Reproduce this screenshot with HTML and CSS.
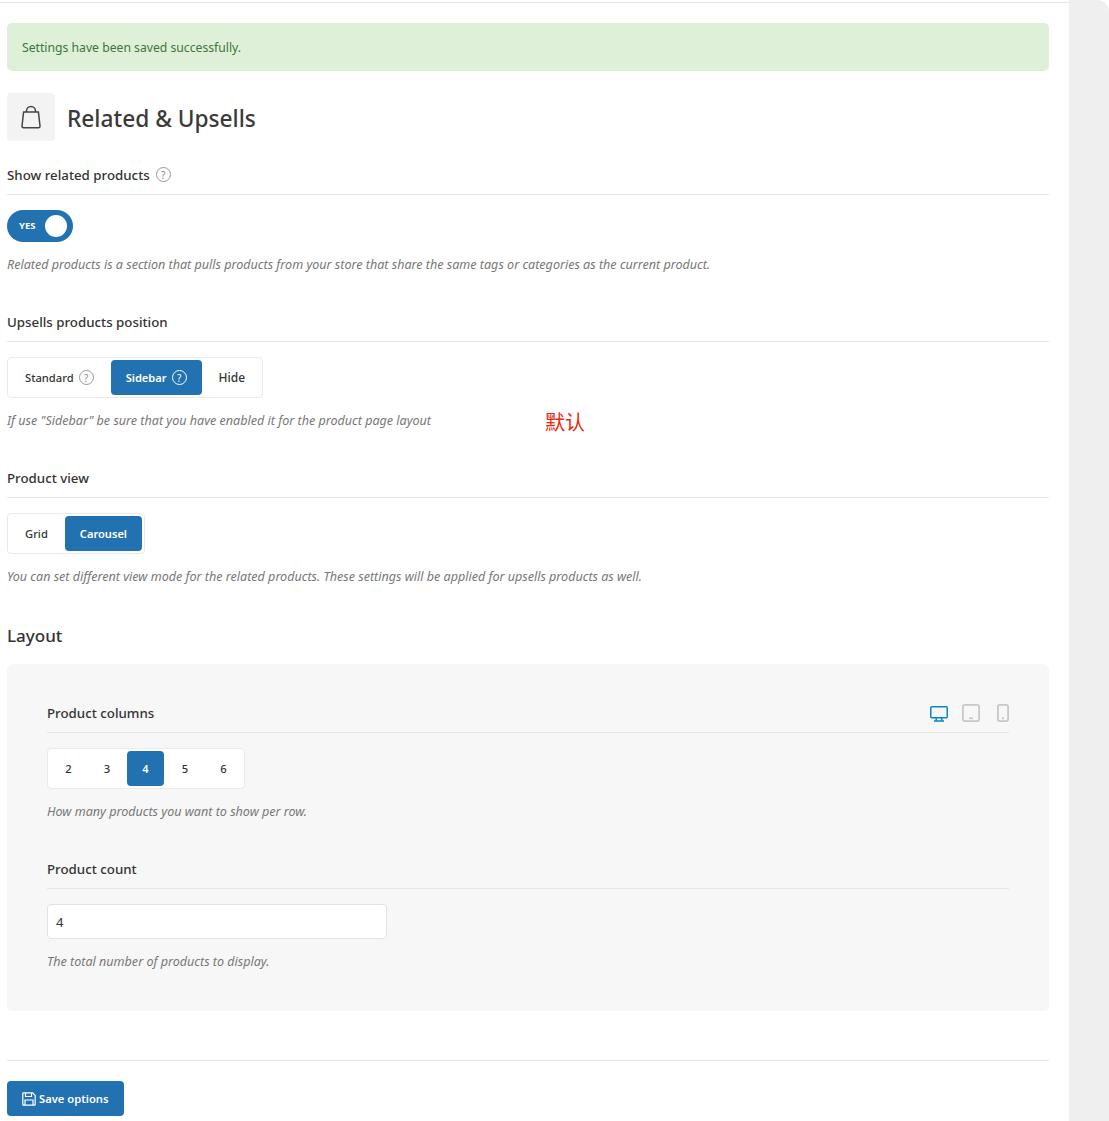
FILE: index.html
```html
<!DOCTYPE html>
<html lang="en">
<head>
    <meta charset="UTF-8">
    <meta name="viewport" content="width=device-width, initial-scale=1.0">
    <title>Related &amp; Upsells</title>
    <link rel="stylesheet" href="styles.css">
</head>
<body>
    <div class="page">
        <main class="main">
            <div class="notice">Settings have been saved successfully.</div>

            <div class="page-title">
                <span class="title-icon">
                    <svg width="22" height="24" viewBox="0 0 22 24" fill="none" stroke="#444" stroke-width="1.5">
                        <path d="M3.600 7h14.800l1.600 14a1.500 1.500 0 0 1-1.500 1.700H3.500a1.500 1.500 0 0 1-1.500-1.700z"/>
                        <path d="M6.500 7V6a4.500 4.500 0 0 1 9 0v1"/>
                    </svg>
                </span>
                <h1>Related &amp; Upsells</h1>
            </div>

            <section class="field field-first">
                <div class="field-head">
                    <h3>Show related products</h3>
                    <span class="help">?</span>
                </div>
                <div class="toggle"><span class="toggle-text">YES</span><span class="toggle-knob"></span></div>
                <p class="desc">Related products is a section that pulls products from your store that share the same tags or categories as the current product.</p>
            </section>

            <section class="field">
                <div class="field-head"><h3>Upsells products position</h3></div>
                <div class="btn-group">
                    <span class="opt">Standard <span class="help">?</span></span>
                    <span class="opt active">Sidebar <span class="help">?</span></span>
                    <span class="opt opt-hide">Hide</span>
                </div>
                <p class="desc">If use "Sidebar" be sure that you have enabled it for the product page layout</p>
                <span class="note">默认</span>
            </section>

            <section class="field">
                <div class="field-head"><h3>Product view</h3></div>
                <div class="btn-group">
                    <span class="opt">Grid</span>
                    <span class="opt active">Carousel</span>
                </div>
                <p class="desc">You can set different view mode for the related products. These settings will be applied for upsells products as well.</p>
            </section>

            <h2 class="group-title">Layout</h2>
            <div class="panel">
                <section class="field panel-field">
                    <div class="field-head">
                        <h3>Product columns</h3>
                        <div class="devices">
                            <svg class="on" width="18" height="18" viewBox="0 0 18 18" fill="none" stroke="#0a86c8" stroke-width="1.5">
                                <rect x=".75" y="2.750" width="16.500" height="11" rx="1"/>
                                <path d="M6.500 14l-.5 2.500M11.500 14l.5 2.500M4 17h10"/>
                            </svg>
                            <svg width="18" height="18" viewBox="0 0 18 18" fill="none" stroke="#c8c8c8" stroke-width="1.800">
                                <rect x=".9" y=".9" width="16.200" height="16.200" rx="2"/>
                                <path d="M7 14.250h4"/>
                            </svg>
                            <svg class="phone" width="12" height="18" viewBox="0 0 12 18" fill="none" stroke="#c8c8c8" stroke-width="1.800">
                                <rect x=".9" y=".9" width="10.200" height="16.200" rx="2"/>
                                <path d="M5 14.250h2"/>
                            </svg>
                        </div>
                    </div>
                    <div class="btn-group num-group">
                        <span class="opt">2</span>
                        <span class="opt">3</span>
                        <span class="opt active">4</span>
                        <span class="opt">5</span>
                        <span class="opt">6</span>
                    </div>
                    <p class="desc">How many products you want to show per row.</p>
                </section>
                <section class="field panel-field">
                    <div class="field-head"><h3>Product count</h3></div>
                    <input class="text-input" type="text" value="4">
                    <p class="desc">The total number of products to display.</p>
                </section>
            </div>

            <div class="actions">
                <button class="save-btn">
                    <svg width="14" height="14" viewBox="0 0 14 14" fill="none" stroke="#fff" stroke-width="1.200">
                        <path d="M1.600.8h9l2.600 2.600v9a.8.8 0 0 1-.8.8H1.600a.8.8 0 0 1-.8-.8V1.600a.8.8 0 0 1 .8-.8z"/>
                        <path d="M3.500 1v3.500h6V1M3 13V8h8v5"/>
                    </svg>
                    Save options
                </button>
            </div>
        </main>
        <aside class="side"></aside>
    </div>
</body>
</html>
```

FILE: styles.css
```css
html, body {
    margin: 0;
    padding: 0;
    background: #fff;
}
body {
    font-family: "Noto Sans", "Noto Sans CJK SC", sans-serif;
    font-size: 13px;
    color: #333;
}
.page {
    display: flex;
    height: 1121px;
    overflow: hidden;
}
.main {
    width: 1069px;
    box-sizing: border-box;
    padding: 0 20px 0 7px;
    position: relative;
    flex: none;
}
.main::before {
    content: "";
    display: block;
    height: 1px;
    margin: 2px -20px 0 -7px;
    background: #e8e8e8;
}
.side {
    width: 40px;
    flex: none;
    background: #efefef;
    border-top-right-radius: 12px;
}
.notice {
    margin-top: 20px;
    height: 47px;
    line-height: 48px;
    padding: 1px 15px 0;
    background: #dff0d8;
    border-radius: 5px;
    color: #3c763d;
    font-size: 12.2px;
}
.page-title {
    display: flex;
    align-items: center;
    gap: 12px;
    margin-top: 22px;
}
.title-icon {
    width: 48px;
    height: 48px;
    display: flex;
    align-items: center;
    justify-content: center;
    background: #f3f3f3;
    border-radius: 4px;
}
h1 {
    margin: 2px 0 0;
    font-size: 22.7px;
    font-weight: 500;
    color: #3a3a3a;
}
.field {
    position: relative;
    margin-top: 35px;
}
.field-first {
    margin-top: 21px;
}
.field-head {
    display: flex;
    align-items: center;
    gap: 6px;
    height: 25px;
    padding-bottom: 7px;
    border-bottom: 1px solid #e5e5e5;
    margin-bottom: 15px;
}
h3 {
    margin: 0;
    font-size: 13.3px;
    font-weight: 500;
    color: #333;
}
.help {
    display: inline-flex;
    align-items: center;
    justify-content: center;
    width: 13px;
    height: 13px;
    border: 1px solid #999;
    border-radius: 50%;
    font-size: 10px;
    line-height: 1;
    font-weight: 400;
    color: #888;
}
.toggle {
    display: flex;
    align-items: center;
    justify-content: space-between;
    box-sizing: border-box;
    width: 66px;
    height: 32px;
    padding: 0 6px 0 12px;
    background: #2271b1;
    border-radius: 16px;
}
.toggle-text {
    margin-bottom: 2px;
    font-size: 9.5px;
    font-weight: 700;
    color: #fff;
}
.toggle-knob {
    width: 22px;
    height: 22px;
    border-radius: 50%;
    background: #fff;
}
.desc {
    margin: 14px 0 0;
    font-size: 12.55px;
    line-height: 18px;
    font-style: italic;
    color: #777;
}
.btn-group {
    display: inline-flex;
    gap: 2px;
    box-sizing: border-box;
    height: 41px;
    padding: 2px;
    background: #fff;
    border: 1px solid #eaeaea;
    border-radius: 4px;
    vertical-align: top;
}
.opt {
    display: flex;
    align-items: center;
    gap: 5px;
    padding: 0 15px;
    font-size: 11.2px;
    font-weight: 500;
    color: #333;
    border-radius: 4px;
}
.opt-hide {
    font-size: 12px;
}
.opt.active {
    background: #2271b1;
    color: #fff;
    font-weight: 600;
    font-size: 11.1px;
}
.opt.active .help {
    border-color: #fff;
    color: #fff;
}
.btn-group + .desc {
    margin-top: 14px;
}
.note {
    position: absolute;
    left: 538px;
    top: 100px;
    font-family: "Noto Sans CJK SC", sans-serif;
    font-size: 20px;
    line-height: 26px;
    color: #e8280c;
}
.group-title {
    margin: 38px 0 0;
    font-size: 17px;
    font-weight: 500;
    line-height: 24px;
    color: #333;
}
.panel {
    margin-top: 16px;
    height: 347px;
    box-sizing: border-box;
    padding: 1px 40px 0;
    background: #f7f7f7;
    border-radius: 6px;
}
.panel-field {
    margin-top: 35px;
}
.devices {
    display: flex;
    align-items: center;
    gap: 14px;
    margin-left: auto;
}
.devices svg {
    display: block;
}
.devices .phone {
    margin-left: 3px;
}
.num-group {
    gap: 1.5px;
}
.num-group .opt {
    width: 37px;
    box-sizing: border-box;
    justify-content: center;
    padding: 0 0 1px;
}
.num-group .active + .opt {
    margin-left: 1px;
}
.text-input {
    display: block;
    box-sizing: border-box;
    width: 340px;
    height: 35px;
    padding: 0 8px;
    background: #fff;
    border: 1px solid #e3e3e3;
    border-radius: 4px;
    font-family: inherit;
    font-size: 13px;
    color: #333;
}
.actions {
    margin-top: 49px;
    padding-top: 20px;
    border-top: 1px solid #e8e8e8;
}
.save-btn {
    display: inline-flex;
    align-items: center;
    gap: 3px;
    height: 35px;
    width: 117px;
    padding: 0 0 0 15px;
    background: #2271b1;
    border: none;
    border-radius: 4px;
    font-family: inherit;
    font-size: 11.2px;
    font-weight: 600;
    color: #fff;
}
```
